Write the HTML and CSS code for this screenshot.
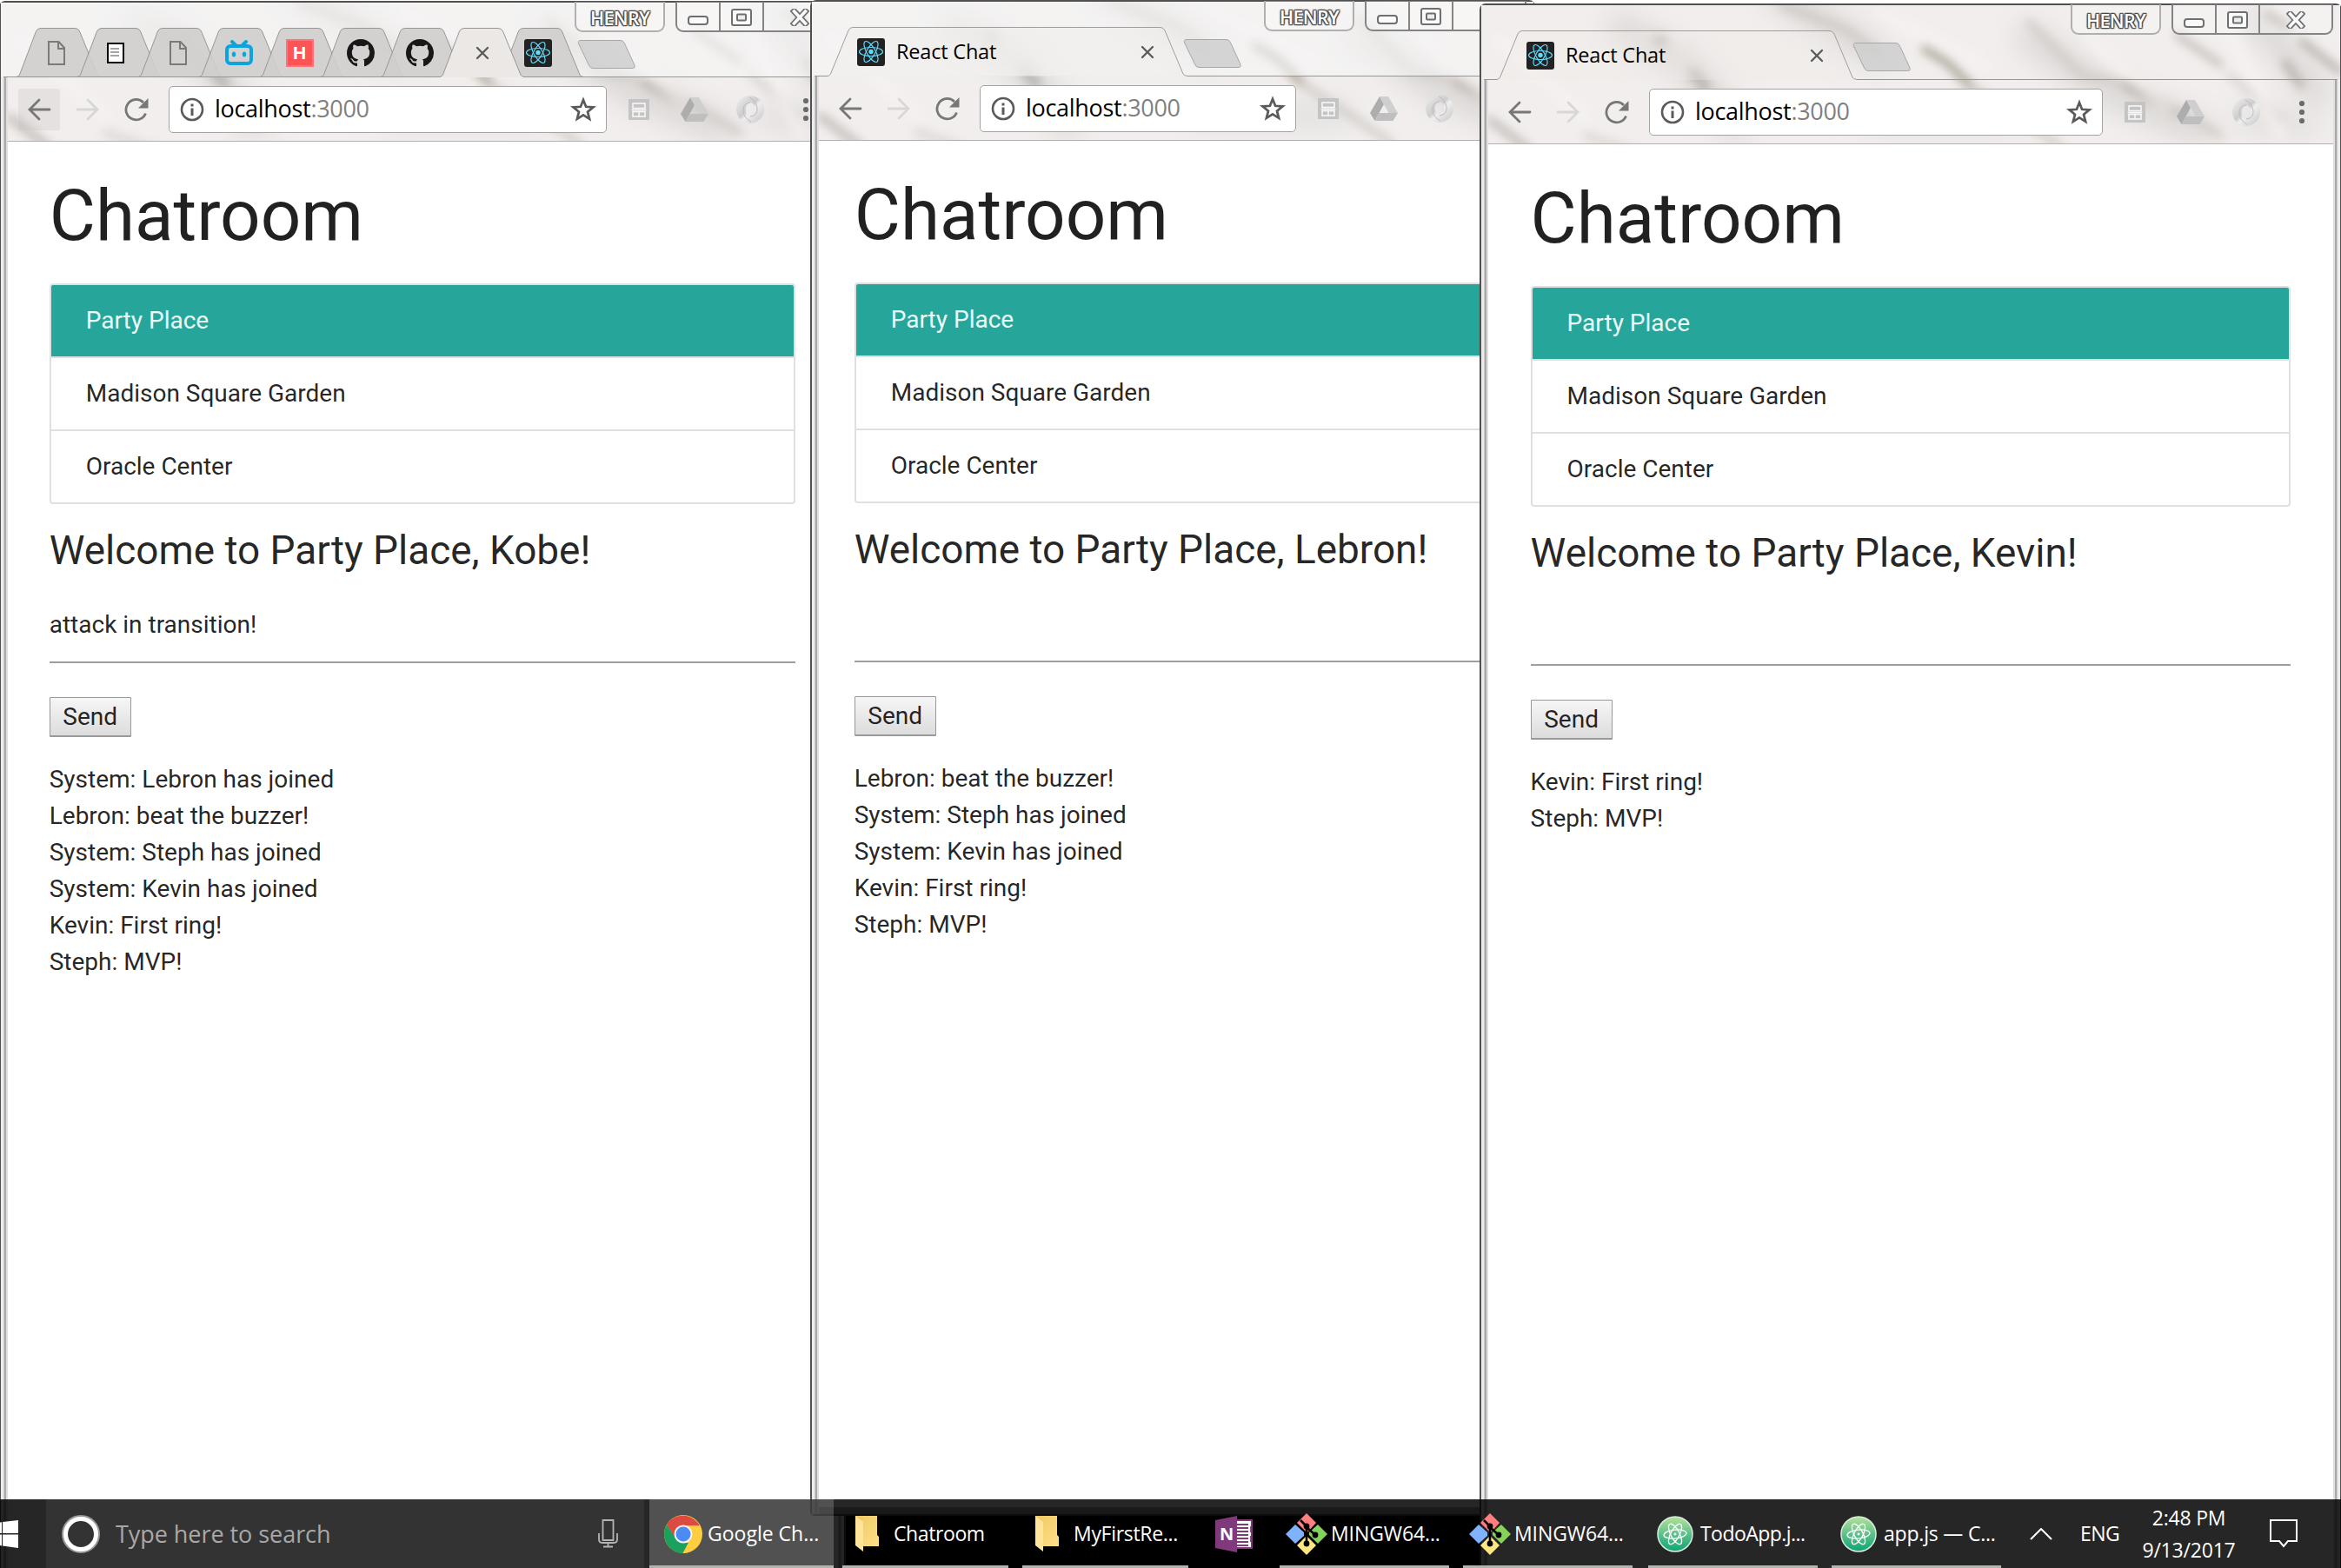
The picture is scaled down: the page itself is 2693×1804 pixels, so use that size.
FILE: index.html
```html
<!DOCTYPE html>
<html lang="en">
<head>
<meta charset="utf-8">
<title>React Chat</title>
<link rel="stylesheet" href="styles.css">
</head>
<body>
<svg class="defs" width="0" height="0" aria-hidden="true">
  <defs>
    <filter id="soft" x="-20%" y="-20%" width="140%" height="140%"><feGaussianBlur stdDeviation="6"/></filter>
    <filter id="softer" x="-20%" y="-20%" width="140%" height="140%"><feGaussianBlur stdDeviation="16"/></filter>
    <linearGradient id="atomFill" x1="0" y1="0" x2="0" y2="1"><stop offset="0" stop-color="#b5e29b"/><stop offset=".5" stop-color="#5fc08a"/><stop offset="1" stop-color="#0aa574"/></linearGradient>
    <linearGradient id="folderFill" x1="0" y1="0" x2="1" y2="1"><stop offset="0" stop-color="#efc862"/><stop offset="1" stop-color="#ffe08a"/></linearGradient>
    <linearGradient id="ringFill" x1="0" y1="0" x2="1" y2="1"><stop offset="0" stop-color="#f0f0f0"/><stop offset=".45" stop-color="#cdcdcd"/><stop offset=".55" stop-color="#efefef"/><stop offset="1" stop-color="#c4c4c4"/></linearGradient>
  </defs>
  <symbol id="marble" viewBox="0 0 992 162" preserveAspectRatio="xMinYMin slice">
    <rect width="992" height="162" fill="#f1eeed"/>
    <g filter="url(#softer)" fill="none" stroke="#d3d0ce" stroke-width="24">
      <path d="M150 20l90 50 60 80"/><path d="M330-20l130 80"/><path d="M620 30l100 70 120 50"/><path d="M440 130h180" stroke="#dfdddd"/><path d="M880 0l90 110"/><path d="M960 140l-90-10" stroke="#dedbda"/>
    </g>
    <g filter="url(#soft)" fill="none" stroke-linecap="round" stroke-width="7">
      <path d="M10 132l45 34" stroke="#bdb6b2" stroke-width="8"/>
      <path d="M204 40l4 2M244 78l14 16" stroke="#b9b5b1" stroke-width="13"/>
      <path d="M345 0l75 28 36 26" stroke="#cac5c0"/>
      <path d="M510 50l26 16 30 30" stroke="#a39b8c" stroke-width="8"/>
      <path d="M566 96l40 26 60 40" stroke="#ccc7c2"/>
      <path d="M630 20l60 60 70 16 50 30 40 24" stroke="#cdc7c3"/>
      <path d="M740 92l56 32" stroke="#b7afa8" stroke-width="9"/>
      <path d="M800 34l50 34" stroke="#c0b9b3"/>
      <path d="M903 10l24 14M925 66l18 26M944 42l44 34" stroke="#aea69e"/>
      <path d="M120 150l60 20M860 80l60 50" stroke="#d5d0ce"/>
      <path d="M20 40l100 90M460 10l120 60M700 40l90 80M860 30l60 120" stroke="#f6f3f2" stroke-width="14" stroke-opacity=".6"/>
    </g>
  </symbol>
  <symbol id="tab-small" viewBox="0 0 97 57"><path d="M0 56.5Q2.500 56 3.500 54L22.500 4Q24 .5 28 .5H67Q71 .5 72.500 4L93 54Q94 56 97 56.500z" fill="#cfcecd" fill-opacity=".9" stroke="#979696"/></symbol>
  <symbol id="tab-small-on" viewBox="0 0 97 57"><path d="M0 56.500Q2.500 56 3.500 54L22.500 4Q24 .5 28 .5H67Q71 .5 72.500 4L93 54Q94 56 97 56.500V57H0z" fill="#ebe8e6"/><path d="M0 56.500Q2.500 56 3.500 54L22.500 4Q24 .5 28 .5H67Q71 .5 72.500 4L93 54Q94 56 97 56.500" fill="none" stroke="#979696"/></symbol>
  <symbol id="tab-wide" viewBox="0 0 414 57"><path d="M0 56.500Q2.500 56 3.500 54L24 4Q25.500 .5 29 .5H383Q386 .5 388 4L409 54Q410 56 414 56.500V57H0z" fill="#efebe9" fill-opacity=".35"/><path d="M0 56.500Q2.500 56 3.500 54L24 4Q25.500 .5 29 .5H383Q386 .5 388 4L409 54Q410 56 414 56.500" fill="none" stroke="#a09e9d"/></symbol>
  <symbol id="newtab" viewBox="0 0 67 33"><path d="M4 .5H50Q53 .5 54.500 4L66 29Q67 32.500 64 32.500H18Q15 32.500 13.500 29L1.500 4Q.5 .5 4 .5z" fill="#cfcfcf" fill-opacity=".85" stroke="#a8a7a6"/></symbol>
  <symbol id="page" viewBox="0 0 20 28"><path d="M1 1H12.500L19 8V27H1zM12 1V9H19" fill="none" stroke="#7a7a7a" stroke-width="2"/></symbol>
  <symbol id="doc" viewBox="0 0 20 24"><rect x="1" y="1" width="18" height="22" fill="#fff" stroke="#000" stroke-width="2"/><path d="M4 7H14M4 11H14M4 15H14" stroke="#888" stroke-width="1.600"/></symbol>
  <symbol id="bili" viewBox="0 0 32 30"><path d="M8 2l5 5M24 2l-5 5" stroke="#0aa5de" stroke-width="4" stroke-linecap="round"/><rect x="2" y="7" width="28" height="20" rx="4" fill="none" stroke="#0aa5de" stroke-width="4"/><ellipse cx="10" cy="16.500" rx="2.200" ry="3" fill="#0aa5de"/><ellipse cx="22" cy="16.500" rx="2.200" ry="3" fill="#0aa5de"/></symbol>
  <symbol id="github" viewBox="0 0 16 16"><path fill="#191717" d="M8 0C3.580 0 0 3.580 0 8c0 3.540 2.290 6.530 5.470 7.590.4.070.55-.17.55-.38 0-.19-.01-.82-.01-1.490-2.010.37-2.530-.49-2.690-.94-.09-.23-.48-.94-.82-1.130-.28-.15-.68-.52-.01-.53.63-.01 1.080.58 1.230.82.72 1.210 1.870.87 2.330.66.070-.52.28-.87.51-1.070-1.780-.2-3.640-.89-3.640-3.950 0-.87.31-1.590.82-2.150-.08-.2-.36-1.020.08-2.120 0 0 .67-.21 2.200.82.64-.18 1.320-.27 2-.27s1.360.09 2 .27c1.530-1.040 2.200-.82 2.200-.82.44 1.100.16 1.920.08 2.120.51.56.82 1.270.82 2.150 0 3.070-1.870 3.750-3.650 3.950.29.25.54.73.54 1.480 0 1.070-.01 1.930-.01 2.200 0 .21.15.46.55.38A8.010 8.010 0 0 0 16 8c0-4.420-3.580-8-8-8z"/></symbol>
  <symbol id="react" viewBox="0 0 32 32"><rect width="32" height="32" rx="3" fill="#222"/><g fill="none" stroke="#61dafb" stroke-width="1.200"><ellipse cx="16" cy="15.500" rx="13.500" ry="5"/><ellipse cx="16" cy="15.500" rx="13.500" ry="5" transform="rotate(60 16 15.500)"/><ellipse cx="16" cy="15.500" rx="13.500" ry="5" transform="rotate(120 16 15.500)"/></g><circle cx="16" cy="15.500" r="2.700" fill="#61dafb"/></symbol>
  <symbol id="x" viewBox="0 0 16 16"><path d="M2 2L14 14M14 2L2 14" stroke="#5a5a5a" stroke-width="2.300" stroke-linecap="round"/></symbol>
  <symbol id="back" viewBox="0 0 28 28"><path d="M26 14H3M14 3L3 14L14 25" fill="none" stroke="currentColor" stroke-width="2.800" stroke-linecap="round" stroke-linejoin="miter"/></symbol>
  <symbol id="reload" viewBox="0 0 28 28"><path d="M24.500 18.500A11.700 11.700 0 1 1 22 6" fill="none" stroke="#777" stroke-width="2.800"/><path d="M27.500 1V12.500H16z" fill="#777"/></symbol>
  <symbol id="info" viewBox="0 0 28 28"><circle cx="14" cy="14" r="12" fill="none" stroke="#5a5a5a" stroke-width="2.600"/><path d="M12.500 7.500h3v3h-3zM12.500 12.500h3v8.500h-3z" fill="#5a5a5a"/></symbol>
  <symbol id="star" viewBox="0 0 30 30"><path d="M15 4L18.100 11.800L26.500 12.400L20 17.700L22.100 25.800L15 21.300L7.900 25.800L10 17.700L3.500 12.400L11.900 11.800z" fill="none" stroke="#5a5a5a" stroke-width="2.700"/></symbol>
  <symbol id="ext" viewBox="0 0 24 24"><rect width="24" height="24" rx="1" fill="#c4c4c4"/><path d="M5 10.500V5H19V10.500zM3.500 12.500H20.500M5 14.500H19V20H5zM12 14.500V20" fill="none" stroke="#fafafa" stroke-width="1.500"/></symbol>
  <symbol id="drive" viewBox="0 0 32 28"><path d="M11 0L0 19L5.500 28L16 9z" fill="#adadad"/><path d="M11 0H21L32 19H21.500z" fill="#cfcfcf"/><path d="M10.500 19H32L26.500 28H5.500z" fill="#bfbfbf"/></symbol>
  <symbol id="ring" viewBox="0 0 32 32"><path fill-rule="evenodd" d="M16 0a16 16 0 1 0 .01 0zM16 8a5.200 8 0 1 0 .01 0z" fill="url(#ringFill)"/><path d="M16 8Q7 9 8 18Q9 26 17 30M16 24Q25 23 24 14Q23 6 15 2" stroke="#bdbdbd" stroke-width="1" fill="none"/></symbol>
  <symbol id="dots" viewBox="0 0 8 28"><g fill="#6b6b6b"><circle cx="4" cy="4" r="3.100"/><circle cx="4" cy="14" r="3.100"/><circle cx="4" cy="24" r="3.100"/></g></symbol>
  <symbol id="w-min" viewBox="0 0 24 12"><rect x="1" y="1" width="22" height="9" rx="3" fill="#fafafa" stroke="#6f6f6f" stroke-width="2"/></symbol>
  <symbol id="w-max" viewBox="0 0 24 20"><rect x="1" y="1" width="22" height="18" rx="2" fill="#fafafa" stroke="#6f6f6f" stroke-width="2"/><rect x="7" y="6.500" width="10" height="7" rx="1" fill="#eee" stroke="#6f6f6f" stroke-width="2"/></symbol>
  <symbol id="w-close" viewBox="0 0 22 20"><path d="M4.500 3L17.500 17M17.500 3L4.500 17" stroke="#6f6f6f" stroke-width="7" stroke-linecap="square"/><path d="M4.500 3L17.500 17M17.500 3L4.500 17" stroke="#fafafa" stroke-width="3.600" stroke-linecap="square"/></symbol>
  <symbol id="folder" viewBox="0 0 27 41"><path d="M0 0H25V22L27 24V35H8L0 28z" fill="url(#folderFill)"/><path d="M0 0L9 7V41L0 34z" fill="#ffe49a"/></symbol>
  <symbol id="git" viewBox="0 0 48 48"><path d="M24 0L35 11L26 21L24 22L13 11z" fill="#ff7f80"/><path d="M37 13L48 24L37 35L27 25V22z" fill="#85d35c"/><path d="M11 13L21 22V26L11 35L0 24z" fill="#80b3ff"/><path d="M24 26L35 37L24 48L13 37z" fill="#ffe680"/><path d="M17 8L24 15V36M25 17L34 25" stroke="#000" stroke-width="2.600" fill="none"/><circle cx="24" cy="15" r="3.400"/><circle cx="34" cy="25" r="3.400"/><circle cx="24" cy="35" r="3.400"/></symbol>
  <symbol id="atom" viewBox="0 0 42 42"><circle cx="21" cy="21" r="20" fill="url(#atomFill)" stroke="#d9eee0" stroke-width="1.500"/><g fill="none" stroke="#fff" stroke-width="1.300"><ellipse cx="21" cy="21" rx="5" ry="13" transform="rotate(28 21 21)"/><ellipse cx="21" cy="21" rx="5" ry="13" transform="rotate(-28 21 21)"/><ellipse cx="21" cy="21" rx="5" ry="13" transform="rotate(84 21 21)"/></g><circle cx="21" cy="21" r="1.500" fill="#fff"/></symbol>
</svg>

<main class="desktop">
  <section class="window window-kobe">
    <header class="chrome inactive">
      <svg class="marble"><use href="#marble" width="992" height="162"/></svg>
      <div class="caption"><div class="profile">HENRY</div><div class="controls"><span class="ctl"><svg class="i-min"><use href="#w-min"/></svg></span><span class="ctl"><svg class="i-max"><use href="#w-max"/></svg></span><span class="ctl close"><svg class="i-close"><use href="#w-close"/></svg></span></div></div>
      <div class="strip">
        <span class="rule lead"></span>
        <div class="tab small"><svg class="shape"><use href="#tab-small"/></svg><svg class="i-page"><use href="#page"/></svg></div>
        <div class="tab small"><svg class="shape"><use href="#tab-small"/></svg><svg class="i-doc"><use href="#doc"/></svg></div>
        <div class="tab small"><svg class="shape"><use href="#tab-small"/></svg><svg class="i-page"><use href="#page"/></svg></div>
        <div class="tab small"><svg class="shape"><use href="#tab-small"/></svg><svg class="i-bili"><use href="#bili"/></svg></div>
        <div class="tab small"><svg class="shape"><use href="#tab-small"/></svg><span class="i-h">H</span></div>
        <div class="tab small tight"><svg class="shape"><use href="#tab-small"/></svg><svg class="i-fav"><use href="#github"/></svg></div>
        <div class="tab small tight"><svg class="shape"><use href="#tab-small"/></svg><svg class="i-fav"><use href="#github"/></svg></div>
        <div class="tab small on"><svg class="shape"><use href="#tab-small-on"/></svg><svg class="i-x"><use href="#x"/></svg></div>
        <div class="tab small last"><svg class="shape"><use href="#tab-small"/></svg><svg class="i-fav"><use href="#react"/></svg></div>
        <div class="after"><svg class="i-new"><use href="#newtab"/></svg></div>
      </div>
      <div class="toolbar">
        <span class="btn hover"><svg class="i-nav"><use href="#back"/></svg></span><span class="btn off"><svg class="i-nav flip"><use href="#back"/></svg></span><span class="btn"><svg class="i-nav"><use href="#reload"/></svg></span>
        <div class="omnibox"><svg class="i-info"><use href="#info"/></svg><span class="url">localhost<span class="port">:3000</span></span><svg class="i-star"><use href="#star"/></svg></div>
        <span class="ext"><svg class="i-ext"><use href="#ext"/></svg></span><span class="ext"><svg class="i-drive"><use href="#drive"/></svg></span><span class="ext"><svg class="i-fav"><use href="#ring"/></svg></span><span class="ext"><svg class="i-dots"><use href="#dots"/></svg></span>
      </div>
    </header>
    <div class="page"><div class="container">
      <h3>Chatroom</h3>
      <ul class="rooms"><li class="active">Party Place</li><li>Madison Square Garden</li><li>Oracle Center</li></ul>
      <h5>Welcome to Party Place, Kobe!</h5>
      <div class="field">attack in transition!</div>
      <button class="send">Send</button>
      <div class="log"><div>System: Lebron has joined</div><div>Lebron: beat the buzzer!</div><div>System: Steph has joined</div><div>System: Kevin has joined</div><div>Kevin: First ring!</div><div>Steph: MVP!</div></div>
    </div></div>
  </section>

  <section class="window window-lebron">
    <header class="chrome inactive">
      <svg class="marble"><use href="#marble" width="992" height="162"/></svg>
      <div class="caption"><div class="profile">HENRY</div><div class="controls"><span class="ctl"><svg class="i-min"><use href="#w-min"/></svg></span><span class="ctl"><svg class="i-max"><use href="#w-max"/></svg></span><span class="ctl close"><svg class="i-close"><use href="#w-close"/></svg></span></div></div>
      <div class="strip">
        <span class="rule lead"></span>
        <div class="tab wide"><svg class="shape"><use href="#tab-wide"/></svg><svg class="i-fav"><use href="#react"/></svg><span class="title">React Chat</span><svg class="i-x"><use href="#x"/></svg></div>
        <div class="after"><svg class="i-new"><use href="#newtab"/></svg></div>
      </div>
      <div class="toolbar">
        <span class="btn"><svg class="i-nav"><use href="#back"/></svg></span><span class="btn off"><svg class="i-nav flip"><use href="#back"/></svg></span><span class="btn"><svg class="i-nav"><use href="#reload"/></svg></span>
        <div class="omnibox"><svg class="i-info"><use href="#info"/></svg><span class="url">localhost<span class="port">:3000</span></span><svg class="i-star"><use href="#star"/></svg></div>
        <span class="ext"><svg class="i-ext"><use href="#ext"/></svg></span><span class="ext"><svg class="i-drive"><use href="#drive"/></svg></span><span class="ext"><svg class="i-fav"><use href="#ring"/></svg></span><span class="ext"><svg class="i-dots"><use href="#dots"/></svg></span>
      </div>
    </header>
    <div class="page"><div class="container">
      <h3>Chatroom</h3>
      <ul class="rooms"><li class="active">Party Place</li><li>Madison Square Garden</li><li>Oracle Center</li></ul>
      <h5>Welcome to Party Place, Lebron!</h5>
      <div class="field"></div>
      <button class="send">Send</button>
      <div class="log"><div>Lebron: beat the buzzer!</div><div>System: Steph has joined</div><div>System: Kevin has joined</div><div>Kevin: First ring!</div><div>Steph: MVP!</div></div>
    </div></div>
  </section>

  <section class="window window-kevin">
    <header class="chrome">
      <svg class="marble"><use href="#marble" width="992" height="162"/></svg>
      <div class="caption"><div class="profile">HENRY</div><div class="controls"><span class="ctl"><svg class="i-min"><use href="#w-min"/></svg></span><span class="ctl"><svg class="i-max"><use href="#w-max"/></svg></span><span class="ctl close"><svg class="i-close"><use href="#w-close"/></svg></span></div></div>
      <div class="strip">
        <span class="rule lead"></span>
        <div class="tab wide"><svg class="shape"><use href="#tab-wide"/></svg><svg class="i-fav"><use href="#react"/></svg><span class="title">React Chat</span><svg class="i-x"><use href="#x"/></svg></div>
        <div class="after"><svg class="i-new"><use href="#newtab"/></svg></div>
      </div>
      <div class="toolbar">
        <span class="btn"><svg class="i-nav"><use href="#back"/></svg></span><span class="btn off"><svg class="i-nav flip"><use href="#back"/></svg></span><span class="btn"><svg class="i-nav"><use href="#reload"/></svg></span>
        <div class="omnibox"><svg class="i-info"><use href="#info"/></svg><span class="url">localhost<span class="port">:3000</span></span><svg class="i-star"><use href="#star"/></svg></div>
        <span class="ext"><svg class="i-ext"><use href="#ext"/></svg></span><span class="ext"><svg class="i-drive"><use href="#drive"/></svg></span><span class="ext"><svg class="i-fav"><use href="#ring"/></svg></span><span class="ext"><svg class="i-dots"><use href="#dots"/></svg></span>
      </div>
    </header>
    <div class="page"><div class="container">
      <h3>Chatroom</h3>
      <ul class="rooms"><li class="active">Party Place</li><li>Madison Square Garden</li><li>Oracle Center</li></ul>
      <h5>Welcome to Party Place, Kevin!</h5>
      <div class="field"></div>
      <button class="send">Send</button>
      <div class="log"><div>Kevin: First ring!</div><div>Steph: MVP!</div></div>
    </div></div>
  </section>

  <footer class="taskbar">
    <div class="start"><svg width="21" height="32" viewBox="0 0 21 32"><path d="M0 2.500L2 2.200V15H0zM3 2L21 0V15H3zM0 16.500H2V29.500L0 29zM3 16.500H21V32L3 29.600z" fill="#fff"/></svg></div>
    <div class="search">
      <svg width="44" height="44" viewBox="0 0 44 44"><circle cx="22" cy="22" r="20.500" fill="none" stroke="#999" stroke-width="3"/><circle cx="22" cy="22" r="17.500" fill="none" stroke="#fff" stroke-width="5"/></svg>
      <span class="hint">Type here to search</span>
      <svg class="mic" width="23" height="33" viewBox="0 0 23 33"><path d="M5.500 1H17.500V24H5.500zM1 16V23Q1 27 5 27H18Q22 27 22 23V16M11.500 27V31.500M6 31.500H17" fill="none" stroke="#b4b4b4" stroke-width="1.800"/></svg>
    </div>
    <div class="task chrome-task"><svg width="44" height="44" viewBox="0 0 44 44"><circle cx="22" cy="22" r="22" fill="#ffcd40"/><path d="M3 11A22 22 0 0 1 41 12.500H22L12.500 27z" fill="#db4b3f"/><path d="M3 11L13 27L22 32H31L21.500 44A22 22 0 0 1 3 11z" fill="#1aa15f"/><path d="M22 12.500H41A22 22 0 0 1 21.500 44L31 26z" fill="#ffcd40"/><circle cx="22" cy="22" r="10.500" fill="#f4f4f4"/><circle cx="22" cy="22" r="8.500" fill="#4c8bf5"/></svg><span class="t-google">Google Ch...</span></div>
    <div class="task folder-task"><svg width="27" height="41"><use href="#folder"/></svg><span class="t-chat">Chatroom</span></div>
    <div class="task folder-task"><svg width="27" height="41"><use href="#folder"/></svg><span class="t-first">MyFirstRe...</span></div>
    <div class="onenote"><svg width="43" height="42" viewBox="0 0 43 42"><path d="M23 5H42V37H23z" fill="#fff" stroke="#80397b" stroke-width="2"/><path d="M25 10H38M25 14H38M25 18H38M25 22H38M25 26H38M25 30H38M25 34H38M41 12V19M41 23V30" stroke="#80397b" stroke-width="1.800"/><path d="M0 5L25 0V42L0 37z" fill="#80397b"/></svg><span>N</span></div>
    <div class="task git-task"><svg width="48" height="48"><use href="#git"/></svg><span class="t-ming">MINGW64...</span></div>
    <div class="task git-task"><svg width="48" height="48"><use href="#git"/></svg><span class="t-ming">MINGW64...</span></div>
    <div class="task atom-task first"><svg width="42" height="42"><use href="#atom"/></svg><span class="t-todo">TodoApp.j...</span></div>
    <div class="task atom-task"><svg width="42" height="42"><use href="#atom"/></svg><span class="t-app">app.js — C...</span></div>
    <div class="tray">
      <svg width="26" height="14" viewBox="0 0 26 14"><path d="M1 13L13 1L25 13" fill="none" stroke="#fff" stroke-width="2"/></svg>
      <span class="lang">ENG</span>
      <div class="clock"><span class="time">2:48 PM</span><span class="date">9/13/2017</span></div>
      <svg class="notes" width="32" height="33" viewBox="0 0 32 33"><path d="M1 1H31V25H21L16 31L11 25H1z" fill="none" stroke="#fff" stroke-width="2"/></svg>
    </div>
  </footer>
</main>
</body>
</html>
```
FILE: styles.css
```css
* { box-sizing: border-box; }
html { font-size: 28px; }
body { margin: 0; overflow: hidden; background: #000; font-family: Roboto, sans-serif; line-height: 1.5; color: rgba(0, 0, 0, .87); }
svg { display: block; flex: none; }
.defs { position: absolute; }
.desktop { position: relative; width: 2693px; height: 1804px; overflow: hidden; background: linear-gradient(#fff 1725px, #000 1725px); }

/* Windows */
.window {
  position: absolute; isolation: isolate; display: flex; flex-direction: column;
  padding: 0 10px 10px; overflow: hidden; border-radius: 7px 7px 5px 5px;
  background:
    linear-gradient(#505050, #505050) top / 100% 2px no-repeat,
    linear-gradient(#505050, #505050) bottom / 100% 2px no-repeat,
    linear-gradient(to right, #505050 2px, #ececec 2px 5px, #a9a9a9 6px 8px, #e2e0df 8px) left / 10px 100% no-repeat,
    linear-gradient(to left, #505050 2px, #ececec 2px 5px, #a9a9a9 6px 8px, #e2e0df 8px) right / 10px 100% no-repeat,
    linear-gradient(#dcdcdc, #aaa);
}
.window-kobe { left: -1px; top: 1px; width: 974px; height: 1830px; }
.window-lebron { left: 932px; top: 0; width: 834px; height: 1744px; }
.window-kevin { left: 1702px; top: 4px; width: 992px; height: 1830px; }

.chrome { position: relative; flex: none; height: 162px; margin: 0 -10px; }
.chrome::before { content: ""; position: absolute; left: 10px; right: 10px; top: 88px; bottom: 0; background: #ece9e8; }
.marble { position: absolute; left: 2px; top: 2px; width: calc(100% - 4px); height: 160px; clip-path: polygon(0 0, 100% 0, 100% 86px, calc(100% - 8px) 86px, calc(100% - 8px) 100%, 8px 100%, 8px 86px, 0 86px); }
.inactive::after { content: ""; position: absolute; left: 2px; right: 2px; top: 2px; height: 85px; background: rgba(246, 246, 246, .62); }

.caption { position: absolute; z-index: 3; top: 1px; right: 10px; display: flex; gap: 12px; height: 35px; }
.profile {
  width: 104px; border: 2px solid #b0afae; border-top: 0; border-radius: 0 0 9px 9px;
  background: rgba(255, 255, 255, .25); font: 600 21.5px/37px "Open Sans", sans-serif; text-align: center; color: #fff; letter-spacing: -.7px;
  text-shadow: 1px 1px 1px #444, -1px -1px 1px #444, 1px -1px 1px #444, -1px 1px 1px #444, 0 0 2px #444, 0 0 2px #444;
}
.controls { display: flex; width: 186px; border: 2px solid #858484; border-top: 0; border-radius: 0 0 9px 9px; background: rgba(255, 255, 255, .25); }
.ctl { width: 50px; display: flex; justify-content: center; align-items: center; border-right: 2px solid #858484; }
.ctl.close { flex: 1; border: 0; }
.i-min { width: 24px; height: 12px; margin-top: 10px; }
.i-max { width: 24px; height: 20px; margin-top: 2px; }
.i-close { width: 22px; height: 20px; margin-top: 2px; }

.strip { position: relative; z-index: 2; height: 88px; display: flex; align-items: flex-end; padding: 0 5px; }
.rule { height: 1px; background: #979696; }
.lead { width: 15px; }
.tab { position: relative; flex: none; height: 57px; display: flex; align-items: center; margin-right: -27px; }
.tab > * { position: relative; }
.tab .shape { position: absolute; left: 0; top: 0; width: 100%; height: 57px; }
.small { width: 97px; justify-content: center; padding-right: 6px; }
.small.tight { margin-right: -28.5px; }
.small.on { z-index: 2; padding-right: 0; margin-right: -29px; }
.small.last { margin-right: 0; padding-right: 7px; }
.wide { width: 414px; padding: 0 38px 0 34px; margin: 0; }
.title { flex: 1; margin-left: 13px; font: 23.5px/1 "Open Sans", sans-serif; color: #000; letter-spacing: -.2px; }
.after { flex: 1; height: 57px; border-bottom: 1px solid #979696; padding: 14px 0 0; }
.last + .after .i-new { margin-left: -7px; }
.i-new { width: 67px; height: 33px; margin-left: -5px; }
.i-page { width: 20px; height: 28px; }
.i-doc { width: 20px; height: 24px; margin-right: 3px; }
.i-bili { width: 32px; height: 30px; }
.i-fav { width: 32px; height: 32px; }
.i-h { width: 32px; height: 32px; border: 2px solid #ff7375; background: #ff5456; color: #fff; text-align: center; font: bold 21px/28px "Liberation Sans", sans-serif; }
.i-x { width: 16px; height: 16px; }

.toolbar { position: relative; z-index: 1; height: 74px; margin: 0 10px; border-bottom: 1px solid #b3b1b0; display: flex; align-items: center; padding: 0 4px 0 12px; }
.btn { width: 48px; height: 48px; margin-right: 8px; display: flex; align-items: center; justify-content: center; color: #777; border-radius: 3px; }
.btn.hover { background: rgba(190, 180, 180, .22); }
.btn.off { color: #d9d7d6; }
.flip { transform: scaleX(-1); }
.i-nav { width: 28px; height: 28px; }
.omnibox { flex: 1; height: 54px; margin: 0 5px; display: flex; align-items: center; padding: 0 11px 0 12px; border: 1px solid #a5a3a2; border-radius: 5px; background: #fff; }
.i-info { width: 28px; height: 28px; }
.url { flex: 1; margin: 0 0 2px 12px; font: 27px/1 "Open Sans", sans-serif; color: #000; letter-spacing: -.3px; }
.port { color: #808080; }
.i-star { width: 30px; height: 30px; }
.ext { width: 64px; display: flex; justify-content: center; }
.i-ext { width: 24px; height: 24px; }
.i-drive { width: 32px; height: 28px; }
.i-dots { width: 8px; height: 28px; }

/* Chat page */
.page { flex: 1; background: #fff; overflow: hidden; }
.container { width: 90%; margin: 0 auto; }
h3 { margin: 1.46rem 0 32px; font-size: 2.92rem; line-height: 110%; font-weight: 400; }
h5 { margin: 0 0 .656rem; font-size: 1.64rem; line-height: 110%; font-weight: 400; }
.rooms { margin: 0 0 1rem; padding: 0; list-style: none; border: 2px solid #e0e0e0; border-radius: 4px; overflow: hidden; }
.rooms li { padding: 20px 40px; border-bottom: 2px solid #e0e0e0; }
.rooms li:last-child { border-bottom: 0; }
.rooms .active { background: #26a69a; color: #eafaf9; }
.field { height: 86px; border-bottom: 2px solid #9e9e9e; line-height: 84px; margin-bottom: 39.5px; }
.send { display: block; width: 94px; height: 46px; padding: 0; border: 1px solid #999; border-bottom-width: 2px; border-radius: 1px; background: linear-gradient(#f6f6f6, #dcdcdc); font: 28px/43px Roboto, sans-serif; color: rgba(0, 0, 0, .87); }
.log { margin-top: 28px; }

/* Taskbar */
.taskbar { position: absolute; left: 0; right: 0; bottom: 0; height: 79px; display: flex; background: rgba(0, 0, 0, .85); color: #fff; font: 23px/1 "Open Sans", sans-serif; white-space: nowrap; }
.start { width: 53px; display: flex; align-items: center; }
.search { width: 688px; margin-right: 6px; display: flex; align-items: center; padding: 0 30px 0 18px; background: #333; }
.hint { flex: 1; margin-left: 18px; font-size: 27px; color: #a8a8a8; letter-spacing: -.05px; }
.task { width: 191px; margin-right: 16px; border-bottom: 3px solid #b3b2ae; display: flex; align-items: center; padding-top: 3px; letter-spacing: -.6px; }
.task .t-google { letter-spacing: 0; }
.task .t-chat { letter-spacing: -.4px; }
.task .t-first { letter-spacing: -.3px; }
.task .t-ming { letter-spacing: -.1px; }
.task .t-todo { letter-spacing: -.55px; }
.task .t-app { letter-spacing: -.2px; }
.chrome-task { width: 212px; margin-right: 10px; padding-left: 17px; background: rgba(255, 255, 255, .2); }
.chrome-task span { margin-left: 6px; }
.folder-task { padding-left: 15px; }
.folder-task span { margin-left: 17px; }
.folder-task + .onenote { margin-left: -16px; }
.onenote { position: relative; width: 105px; display: flex; align-items: center; justify-content: center; }
.onenote span { position: absolute; left: 36px; font-size: 20px; font-weight: 700; }
.git-task { width: 195px; padding-left: 7px; }
.git-task span { margin-left: 4px; }
.git-task + .atom-task { margin-left: 2px; }
.atom-task { width: 195px; padding-left: 10px; }
.atom-task span { margin-left: 8px; }
.tray { flex: 1; display: flex; align-items: center; padding-left: 17px; }
.lang { width: 46px; margin-left: 32px; font-size: 23px; letter-spacing: -.6px; }
.clock { width: 128px; margin-left: 15px; display: flex; flex-direction: column; align-items: center; gap: 14px; letter-spacing: -.2px; }
.notes { margin-left: 29px; }
```
